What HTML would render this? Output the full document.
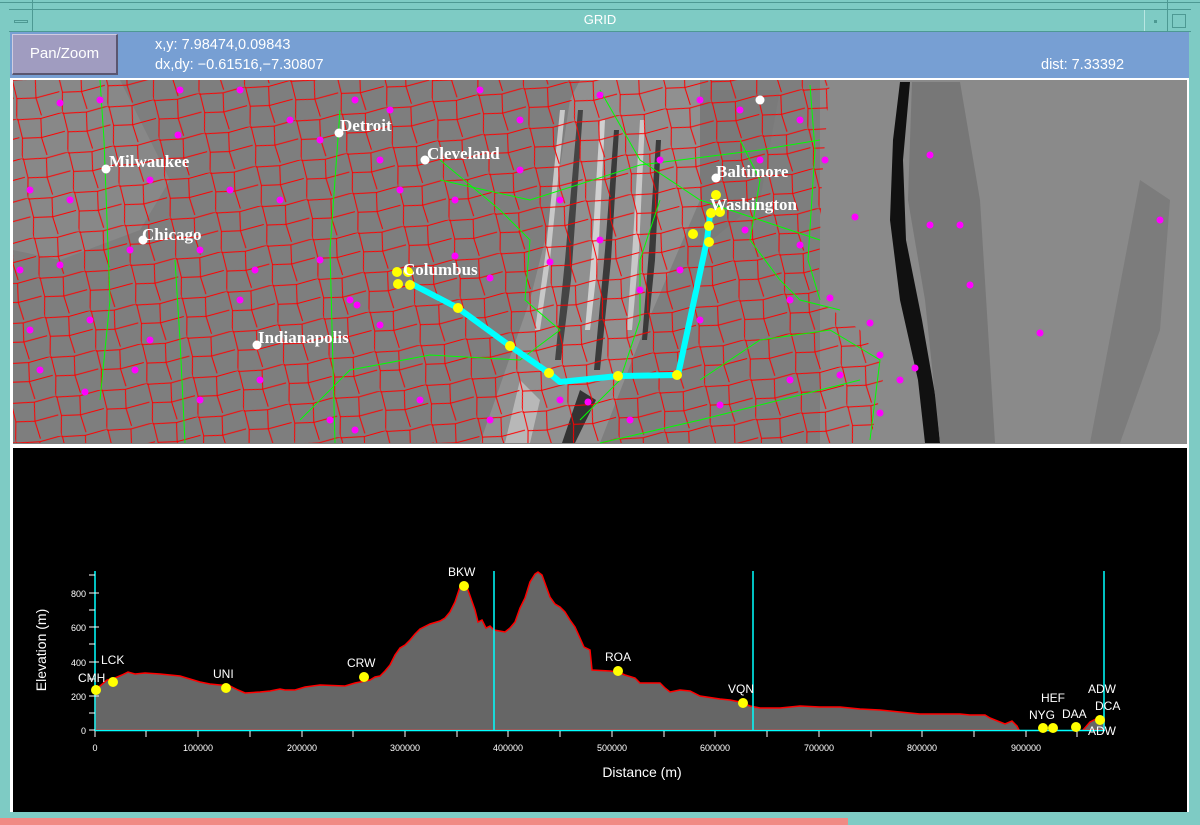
<!DOCTYPE html>
<html><head><meta charset="utf-8"><style>
html,body{margin:0;padding:0;width:1200px;height:825px;overflow:hidden;background:#7ecbc4;font-family:"Liberation Sans",sans-serif}
.abs{position:absolute}
</style></head><body>
<div class="abs" style="left:0;top:0;width:1200px;height:825px;background:#7ecbc4"></div>
<div class="abs" style="left:0;top:2px;width:1200px;height:1px;background:#4d9993"></div>
<div class="abs" style="left:9px;top:9px;width:1182px;height:1px;background:#4d9993"></div>
<div class="abs" style="left:9px;top:31px;width:1182px;height:1px;background:#4d9993"></div>
<div class="abs" style="left:32px;top:0;width:1px;height:32px;background:#4d9993"></div>
<div class="abs" style="left:1167px;top:0;width:1px;height:32px;background:#4d9993"></div>
<div class="abs" style="left:1144px;top:10px;width:1px;height:21px;background:#b8e6e2"></div>
<div class="abs" style="left:14px;top:20px;width:14px;height:3px;border:1px solid #4d9993;box-sizing:border-box"></div>
<div class="abs" style="left:1154px;top:20px;width:3px;height:3px;background:#4d9993"></div>
<div class="abs" style="left:1172px;top:14px;width:14px;height:14px;border:1px solid #4d9993;box-sizing:border-box"></div>
<div class="abs" style="left:0;top:12px;width:1200px;text-align:center;color:#fff;font-size:13px">GRID</div>
<div class="abs" style="left:10px;top:32px;width:1179px;height:46px;background:#779fd3"></div>
<div class="abs" style="left:12px;top:34px;width:106px;height:41px;background:#a09cc0;border-top:1px solid #d0cce0;border-left:1px solid #d0cce0;border-right:2px solid #5a5670;border-bottom:2px solid #5a5670;box-sizing:border-box;color:#fff;font-size:15px;text-align:center;line-height:38px">Pan/Zoom</div>
<div class="abs" style="left:155px;top:35px;color:#fff;font-size:14.5px;line-height:20px">x,y: 7.98474,0.09843<br>dx,dy: &minus;0.61516,&minus;7.30807</div>
<div class="abs" style="left:1041px;top:55px;color:#fff;font-size:14.5px;line-height:20px">dist: 7.33392</div>
<div class="abs" style="left:10px;top:78px;width:1179px;height:734px;background:#fff"></div>
<svg class="abs" style="left:13px;top:80px" width="1174" height="364" viewBox="13 80 1174 364">
<defs>
<pattern id="cty" width="46" height="40" patternUnits="userSpaceOnUse" patternTransform="rotate(-8)">
<path d="M0 1 L24 3 L46 0 M1 0 L3 20 L0 40 M24 3 L22 22 L25 40 M3 20 L22 22 L46 19" stroke="#f00" stroke-width="1" fill="none"/>
</pattern>
<clipPath id="land"><path d="M13 80 L830 80 L822 180 L818 300 L860 330 L885 370 L870 443 L13 443 Z"/></clipPath>
</defs>
<rect x="13" y="80" width="1174" height="364" fill="#7e7e7e"/>
<path d="M13 80 L120 80 L170 180 L140 230 L60 260 L13 250 Z" fill="#888"/>
<rect x="820" y="80" width="367" height="364" fill="#8a8a8a"/>
<path d="M900 82 L910 82 L903 160 L906 240 L922 320 L936 400 L940 443 L925 443 L918 380 L900 300 L890 220 L893 140 Z" fill="#111"/>
<path d="M912 82 L960 82 L980 200 L995 443 L940 443 L925 300 L908 200 Z" fill="#777"/>
<path d="M1140 180 L1170 200 L1160 330 L1120 443 L1090 443 Z" fill="#7c7c7c"/>
<path d="M700 90 L780 90 L760 200 L700 250 Z" fill="#7a7a7a"/>
<g>
<path d="M480 443 L530 300 L555 200 L570 100 L580 80 L700 80 L700 200 L640 340 L600 443 Z" fill="#909090"/>
<path d="M560 110 L565 110 L550 260 L540 330 L535 330 L546 250 Z" fill="#c8c8c8"/>
<path d="M578 110 L583 110 L571 280 L561 360 L555 360 L565 260 Z" fill="#444"/>
<path d="M600 120 L605 120 L598 260 L590 330 L585 330 L592 250 Z" fill="#d0d0d0"/>
<path d="M614 130 L619 130 L611 260 L600 370 L594 370 L605 250 Z" fill="#3a3a3a"/>
<path d="M640 120 L645 120 L639 250 L632 330 L627 330 L633 240 Z" fill="#c8c8c8"/>
<path d="M656 140 L661 140 L655 260 L647 340 L642 340 L649 250 Z" fill="#3a3a3a"/>
<path d="M520 380 L540 400 L530 443 L505 443 Z" fill="#b8b8b8"/>
<path d="M580 390 L596 400 L575 443 L562 443 Z" fill="#333"/>
</g>
<g clip-path="url(#land)">
<rect x="13" y="80" width="880" height="364" fill="url(#cty)"/>
</g>
<g stroke="#0f0" stroke-width="1" fill="none">
<path d="M100 80 L104 140 L110 300 L100 400"/>
<path d="M175 260 L180 340 L185 443"/>
<path d="M340 110 L330 250 L335 443"/>
<path d="M440 160 L500 210 L530 240 L525 300 L560 330 L520 360 L430 355 L350 370 L300 420"/>
<path d="M440 180 L530 200 L640 165 L760 150 L820 140"/>
<path d="M600 90 L640 160 L700 200 L760 220 L820 240"/>
<path d="M660 200 L640 260 L640 320 L620 380 L580 420"/>
<path d="M700 380 L760 340 L830 330 L880 360 L870 440"/>
<path d="M600 443 L700 420 L860 380"/>
<path d="M810 85 L815 150 L808 260 L820 300"/>
<path d="M740 140 L760 180 L750 240 L780 280 L800 300 L840 310"/>
</g>
<g fill="#f0f">
<circle cx="60" cy="103" r="3.5"/><circle cx="100" cy="100" r="3.5"/><circle cx="180" cy="90" r="3.5"/><circle cx="178" cy="135" r="3.5"/><circle cx="240" cy="90" r="3.5"/><circle cx="290" cy="120" r="3.5"/><circle cx="320" cy="140" r="3.5"/><circle cx="355" cy="100" r="3.5"/><circle cx="390" cy="110" r="3.5"/><circle cx="480" cy="90" r="3.5"/><circle cx="520" cy="120" r="3.5"/><circle cx="600" cy="95" r="3.5"/><circle cx="700" cy="100" r="3.5"/><circle cx="740" cy="110" r="3.5"/><circle cx="800" cy="120" r="3.5"/><circle cx="30" cy="190" r="3.5"/><circle cx="70" cy="200" r="3.5"/><circle cx="150" cy="180" r="3.5"/><circle cx="230" cy="190" r="3.5"/><circle cx="280" cy="200" r="3.5"/><circle cx="380" cy="160" r="3.5"/><circle cx="400" cy="190" r="3.5"/><circle cx="455" cy="200" r="3.5"/><circle cx="520" cy="170" r="3.5"/><circle cx="560" cy="200" r="3.5"/><circle cx="660" cy="160" r="3.5"/><circle cx="760" cy="160" r="3.5"/><circle cx="825" cy="160" r="3.5"/><circle cx="930" cy="155" r="3.5"/><circle cx="20" cy="270" r="3.5"/><circle cx="60" cy="265" r="3.5"/><circle cx="130" cy="250" r="3.5"/><circle cx="200" cy="250" r="3.5"/><circle cx="255" cy="270" r="3.5"/><circle cx="320" cy="260" r="3.5"/><circle cx="455" cy="256" r="3.5"/><circle cx="550" cy="262" r="3.5"/><circle cx="600" cy="240" r="3.5"/><circle cx="680" cy="270" r="3.5"/><circle cx="745" cy="230" r="3.5"/><circle cx="800" cy="245" r="3.5"/><circle cx="855" cy="217" r="3.5"/><circle cx="930" cy="225" r="3.5"/><circle cx="960" cy="225" r="3.5"/><circle cx="1160" cy="220" r="3.5"/><circle cx="30" cy="330" r="3.5"/><circle cx="90" cy="320" r="3.5"/><circle cx="150" cy="340" r="3.5"/><circle cx="240" cy="300" r="3.5"/><circle cx="350" cy="300" r="3.5"/><circle cx="357" cy="305" r="3.5"/><circle cx="380" cy="325" r="3.5"/><circle cx="490" cy="278" r="3.5"/><circle cx="640" cy="290" r="3.5"/><circle cx="700" cy="320" r="3.5"/><circle cx="790" cy="300" r="3.5"/><circle cx="830" cy="298" r="3.5"/><circle cx="870" cy="323" r="3.5"/><circle cx="970" cy="285" r="3.5"/><circle cx="1040" cy="333" r="3.5"/><circle cx="40" cy="370" r="3.5"/><circle cx="85" cy="392" r="3.5"/><circle cx="135" cy="370" r="3.5"/><circle cx="200" cy="400" r="3.5"/><circle cx="260" cy="380" r="3.5"/><circle cx="330" cy="420" r="3.5"/><circle cx="355" cy="430" r="3.5"/><circle cx="420" cy="400" r="3.5"/><circle cx="490" cy="420" r="3.5"/><circle cx="560" cy="400" r="3.5"/><circle cx="588" cy="402" r="3.5"/><circle cx="630" cy="420" r="3.5"/><circle cx="720" cy="405" r="3.5"/><circle cx="790" cy="380" r="3.5"/><circle cx="840" cy="375" r="3.5"/><circle cx="880" cy="355" r="3.5"/><circle cx="915" cy="368" r="3.5"/><circle cx="880" cy="413" r="3.5"/><circle cx="900" cy="380" r="3.5"/>
</g>
<polyline points="408,282 458,308 510,346 549,373 560,382 618,376 678,375 707,240 710,215" fill="none" stroke="#0ff" stroke-width="6" stroke-linejoin="round"/>
<g fill="#ff0">
<circle cx="397" cy="272" r="5"/><circle cx="408" cy="272" r="5"/><circle cx="398" cy="284" r="5"/><circle cx="410" cy="285" r="5"/><circle cx="458" cy="308" r="5"/><circle cx="510" cy="346" r="5"/><circle cx="549" cy="373" r="5"/><circle cx="618" cy="376" r="5"/><circle cx="677" cy="375" r="5"/><circle cx="693" cy="234" r="5"/><circle cx="709" cy="242" r="5"/><circle cx="709" cy="226" r="5"/><circle cx="711" cy="213" r="5"/><circle cx="720" cy="212" r="5"/><circle cx="716" cy="195" r="5"/>
</g>
<g fill="#fff"><circle cx="339" cy="133" r="4.5"/><circle cx="106" cy="169" r="4.5"/><circle cx="143" cy="240" r="4.5"/><circle cx="425" cy="160" r="4.5"/><circle cx="257" cy="345" r="4.5"/><circle cx="716" cy="178" r="4.5"/><circle cx="760" cy="100" r="4.5"/></g>
<g fill="#fff" font-family="Liberation Serif,serif" font-weight="bold" font-size="17">
<text x="340" y="131">Detroit</text><text x="109" y="167">Milwaukee</text><text x="142" y="240">Chicago</text><text x="427" y="159">Cleveland</text><text x="403" y="275">Columbus</text><text x="258" y="343">Indianapolis</text><text x="716" y="177">Baltimore</text><text x="710" y="210">Washington</text>
</g>
</svg>
<div class="abs" style="left:13px;top:444px;width:1174px;height:3px;background:#fff"></div>
<svg class="abs" style="left:13px;top:448px" width="1174" height="364" viewBox="13 448 1174 364">
<rect x="13" y="448" width="1174" height="364" fill="#000"/>
<polygon points="95,730 95,690 100,686 107,680 115,678 122,675 128,672 135,674 145,673 160,674 180,676 190,679 200,682 210,684 230,686 238,690 245,693 260,692 270,691 280,689 285,690 295,690 305,687 320,685 345,686 355,683 370,680 375,677 380,676 385,671 390,665 395,655 400,648 405,645 410,640 415,634 420,629 430,624 440,621 445,618 450,612 455,602 460,587 464,585 468,590 475,610 478,622 482,620 486,628 490,626 494,630 505,632 510,628 515,622 520,608 525,598 530,582 535,574 538,572 542,575 546,586 550,597 555,604 560,607 565,612 570,620 575,627 580,638 584,647 590,650 592,670 610,671 618,672 625,675 635,678 640,683 660,683 665,688 670,692 680,690 690,691 700,696 720,699 730,700 740,702 750,706 760,708 780,708 800,706 820,707 840,707 860,709 880,710 900,712 920,714 940,714 960,714 970,715 985,715 990,718 995,720 1005,724 1012,721 1017,726 1019,730" fill="#666" stroke="#f00" stroke-width="1.5"/>
<polygon points="1083,730 1090,722 1100,717 1104,718 1104,730" fill="#666" stroke="#f00" stroke-width="1.5"/>
<g stroke="#0ff" stroke-width="1.5"><line x1="95" y1="571" x2="95" y2="731"/><line x1="95" y1="730.5" x2="1105" y2="730.5"/><line x1="1104" y1="571" x2="1104" y2="731"/><line x1="494" y1="571" x2="494" y2="730"/><line x1="753" y1="571" x2="753" y2="730"/></g>
<g stroke="#fff" stroke-width="1"><line x1="89" y1="575" x2="95" y2="575"/><line x1="89" y1="593" x2="99" y2="593"/><line x1="89" y1="610" x2="95" y2="610"/><line x1="89" y1="627" x2="99" y2="627"/><line x1="89" y1="644" x2="95" y2="644"/><line x1="89" y1="662" x2="99" y2="662"/><line x1="89" y1="679" x2="95" y2="679"/><line x1="89" y1="696" x2="99" y2="696"/><line x1="89" y1="713" x2="95" y2="713"/><line x1="89" y1="730" x2="95" y2="730"/>
<line x1="95" y1="731" x2="95" y2="737"/><line x1="146" y1="731" x2="146" y2="737"/><line x1="198" y1="731" x2="198" y2="737"/><line x1="250" y1="731" x2="250" y2="737"/><line x1="302" y1="731" x2="302" y2="737"/><line x1="353" y1="731" x2="353" y2="737"/><line x1="405" y1="731" x2="405" y2="737"/><line x1="457" y1="731" x2="457" y2="737"/><line x1="508" y1="731" x2="508" y2="737"/><line x1="560" y1="731" x2="560" y2="737"/><line x1="612" y1="731" x2="612" y2="737"/><line x1="664" y1="731" x2="664" y2="737"/><line x1="715" y1="731" x2="715" y2="737"/><line x1="767" y1="731" x2="767" y2="737"/><line x1="819" y1="731" x2="819" y2="737"/><line x1="871" y1="731" x2="871" y2="737"/><line x1="922" y1="731" x2="922" y2="737"/><line x1="974" y1="731" x2="974" y2="737"/><line x1="1026" y1="731" x2="1026" y2="737"/><line x1="1077" y1="731" x2="1077" y2="737"/></g>
<g fill="#fff" font-size="9" text-anchor="end"><text x="86" y="597">800</text><text x="86" y="631">600</text><text x="86" y="666">400</text><text x="86" y="700">200</text><text x="86" y="734">0</text></g>
<g fill="#fff" font-size="9" text-anchor="middle"><text x="95" y="751">0</text><text x="198" y="751">100000</text><text x="302" y="751">200000</text><text x="405" y="751">300000</text><text x="508" y="751">400000</text><text x="612" y="751">500000</text><text x="715" y="751">600000</text><text x="819" y="751">700000</text><text x="922" y="751">800000</text><text x="1026" y="751">900000</text></g>
<text x="642" y="777" fill="#fff" font-size="14" text-anchor="middle">Distance (m)</text>
<text transform="translate(46,650) rotate(-90)" fill="#fff" font-size="14" text-anchor="middle">Elevation (m)</text>
<g fill="#ff0"><circle cx="96" cy="690" r="5"/><circle cx="113" cy="682" r="5"/><circle cx="226" cy="688" r="5"/><circle cx="364" cy="677" r="5"/><circle cx="464" cy="586" r="5"/><circle cx="618" cy="671" r="5"/><circle cx="743" cy="703" r="5"/><circle cx="1043" cy="728" r="5"/><circle cx="1053" cy="728" r="5"/><circle cx="1076" cy="727" r="5"/><circle cx="1100" cy="720" r="5"/></g>
<g fill="#fff" font-size="12"><text x="78" y="682">CMH</text><text x="101" y="664">LCK</text><text x="213" y="678">UNI</text><text x="347" y="667">CRW</text><text x="448" y="576">BKW</text><text x="605" y="661">ROA</text><text x="728" y="693">VQN</text><text x="1041" y="702">HEF</text><text x="1029" y="719">NYG</text><text x="1062" y="718">DAA</text><text x="1088" y="693">ADW</text><text x="1095" y="710">DCA</text><text x="1088" y="735">ADW</text></g>
</svg>
<div class="abs" style="left:0;top:818px;width:848px;height:7px;background:#f08a84"></div>
</body></html>
